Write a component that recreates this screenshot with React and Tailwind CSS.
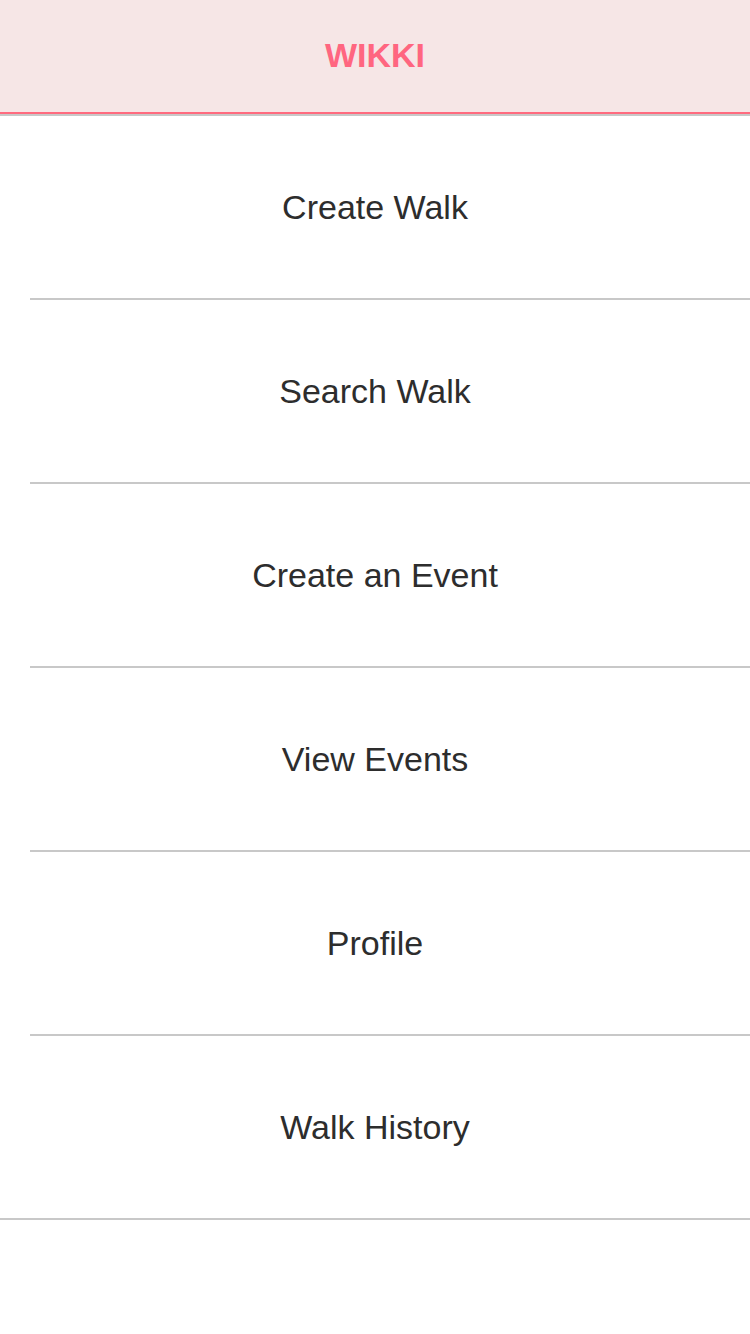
import React from 'react';

const items = ['Create Walk', 'Search Walk', 'Create an Event', 'View Events', 'Profile', 'Walk History'];

export default function App() {
  return (
    <div className="min-h-[1334px] bg-white font-['Liberation_Sans',Arial,sans-serif]">
      {/* Header */}
      <header className="h-[114px] bg-[#f6e6e6] border-b-2 border-[#ff6b7f] flex items-center justify-center">
        <h1 className="text-[34px] font-bold text-[#ff6680] leading-none -mt-[2px]">WIKKI</h1>
      </header>
      <div className="h-[2px] bg-[#c8c8c8]" />

      {/* Menu */}
      <nav>
        {items.map((label, i) => (
          <div
            key={label}
            className={`h-[184px] flex items-center justify-center border-b-2 border-[#c8c8c8] ${i === items.length - 1 ? '' : 'ml-[30px] pr-[30px]'}`}
          >
            <span className="text-[34px] text-[#2d2d2d] leading-none">{label}</span>
          </div>
        ))}
      </nav>
    </div>
  );
}
